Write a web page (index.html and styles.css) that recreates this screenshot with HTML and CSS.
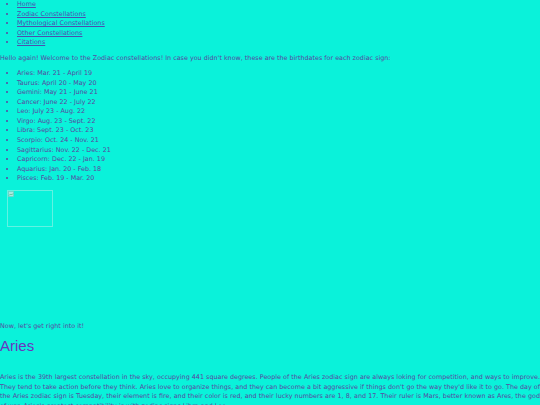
FILE: index.html
```html
<!DOCTYPE html>
<html lang="en">
<head>
<meta charset="utf-8">
<title>Zodiac Constellations</title>
<link rel="stylesheet" href="styles.css">
</head>
<body>
<ul class="nav">
  <li><a href="#">Home</a></li>
  <li><a href="#">Zodiac Constellations</a></li>
  <li><a href="#">Mythological Constellations</a></li>
  <li><a href="#">Other Constellations</a></li>
  <li><a href="#">Citations</a></li>
</ul>
<p class="text intro">Hello again! Welcome to the Zodiac constellations! In case you didn't know, these are the birthdates for each zodiac sign:</p>
<ul class="signs">
  <li>Aries: Mar. 21 - April 19</li>
  <li>Taurus: April 20 - May 20</li>
  <li>Gemini: May 21 - June 21</li>
  <li>Cancer: June 22 - July 22</li>
  <li>Leo: July 23 - Aug. 22</li>
  <li>Virgo: Aug. 23 - Sept. 22</li>
  <li>Libra: Sept. 23 - Oct. 23</li>
  <li>Scorpio: Oct. 24 - Nov. 21</li>
  <li>Sagittarius: Nov. 22 - Dec. 21</li>
  <li>Capricorn: Dec. 22 - Jan. 19</li>
  <li>Aquarius: Jan. 20 - Feb. 18</li>
  <li>Pisces: Feb. 19 - Mar. 20</li>
</ul>
<div class="pic-area">
  <div class="broken">
    <svg class="broken-icon" width="6" height="6" viewBox="0 0 6 6"><rect x="0.5" y="0.5" width="5" height="5" fill="#a8e8e0" stroke="#7cc8c0" stroke-width="0.6"/><path d="M1 4.5 L2.5 3 L3.5 4 L5 2.5" fill="none" stroke="#4caf70" stroke-width="0.7"/></svg>
  </div>
</div>
<p class="text">Now, let's get right into it!</p>
<h2 class="title">Aries</h2>
<p class="text justify">Aries is the 39th largest constellation in the sky, occupying 441 square degrees. People of the Aries zodiac sign are always loking for competition, and ways to improve. They tend to take action before they think. Aries love to organize things, and they can become a bit aggressive if things don't go the way they'd like it to go. The day of the Aries zodiac sign is Tuesday, their element is fire, and their color is red, and their lucky numbers are 1, 8, and 17. Their ruler is Mars, better known as Ares, the god of war. Aries's greatest compatibility is with zodiac signs Libra and Leo.</p>
</body>
</html>
```
FILE: styles.css
```css
html, body {
  margin: 0;
  padding: 0;
  background: #0af2da;
}
body {
  font-family: "DejaVu Sans", Verdana, sans-serif;
  font-size: 6.4px;
  line-height: 9.55px;
  color: #5b45a0;
}
.nav, .signs {
  margin: 0;
  padding-left: 17px;
}
.nav a {
  color: #4d4fb0;
  text-decoration: underline;
}
.signs {
  margin-top: 5.4px;
}
.text {
  margin: 7px 0 0 0;
}
.intro {
  margin-top: 6.5px;
}
.pic-area {
  height: 131.4px;
  padding: 6px 0 0 7px;
  box-sizing: border-box;
}
.broken {
  width: 46px;
  height: 37px;
  box-sizing: border-box;
  border: 1px solid #62f2e2;
  position: relative;
}
.broken-icon {
  position: absolute;
  left: 0;
  top: 0;
}
.title {
  margin: 5.3px 0 0 0;
  font-family: "Liberation Sans", Arial, sans-serif;
  font-weight: normal;
  font-size: 15px;
  line-height: 18px;
  color: #6a34c0;
}
.justify {
  margin-top: 18px;
  text-align: justify;
}
```
